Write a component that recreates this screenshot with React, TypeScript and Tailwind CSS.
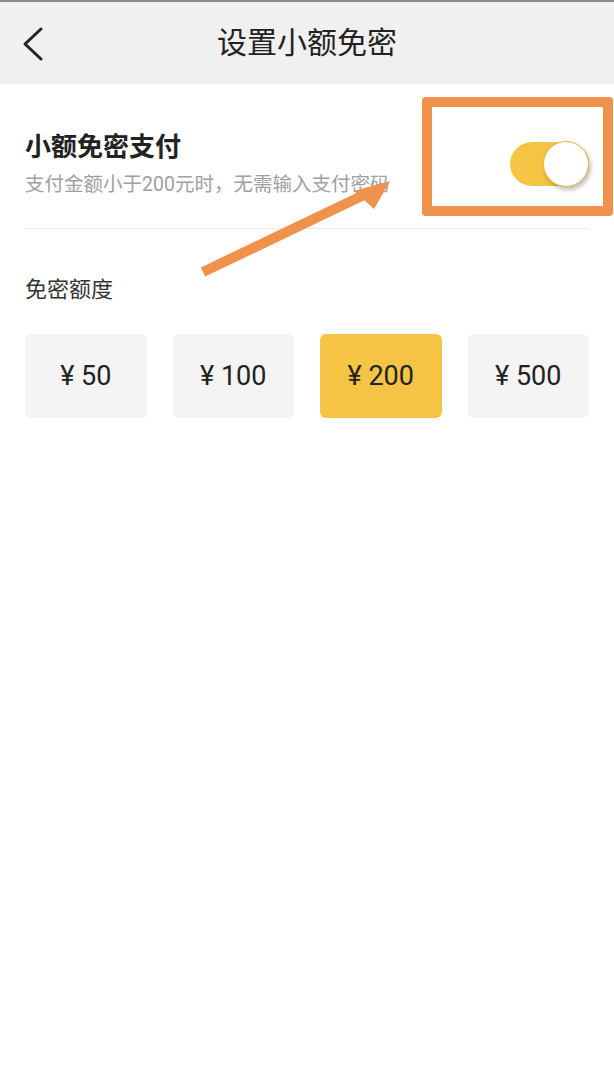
import { useState } from 'react'

const amounts = [50, 100, 200, 500]

export default function App() {
  const [enabled, setEnabled] = useState(true)
  const [amount, setAmount] = useState(200)

  return (
    <div
      className="relative min-h-[1080px] w-[614px] bg-white"
      style={{ fontFamily: 'Roboto, "Noto Sans CJK SC", sans-serif' }}
    >
      {/* header */}
      <div className="relative flex h-[84px] items-center justify-center border-t-2 border-[#8a8a8a] bg-[#f0f0f0]">
        <button className="absolute left-[18px] top-[22px] flex h-[40px] w-[30px] items-center justify-center">
          <svg width="24" height="36" viewBox="0 0 24 36" fill="none">
            <path d="M20 3 L4 18 L20 33" stroke="#222" strokeWidth="3" strokeLinecap="round" strokeLinejoin="round" />
          </svg>
        </button>
        <h1 className="text-[30px] leading-none text-[#222]">设置小额免密</h1>
      </div>

      <div className="px-[25px]">
        {/* toggle row */}
        <div className="flex items-center justify-between border-b border-[#ececec] pb-[30px] pt-[46px]">
          <div className="flex flex-col">
            <span className="text-[26px] font-bold leading-[34px] text-[#222]">小额免密支付</span>
            <span className="mt-[8px] text-[19.5px] leading-[26px] text-[#a0a0a0]">
              支付金额小于200元时，无需输入支付密码
            </span>
          </div>
          <button
            onClick={() => setEnabled(!enabled)}
            className={`relative h-[44px] w-[79px] rounded-full ${enabled ? 'bg-[#f5c444]' : 'bg-[#ddd]'}`}
          >
            <span
              className={`absolute top-[-1px] h-[46px] w-[46px] rounded-full border border-[#e2b93a] bg-white shadow-[2px_3px_4px_rgba(0,0,0,0.25)] ${enabled ? 'right-0' : 'left-0'}`}
            />
          </button>
        </div>

        {/* amount */}
        <div className="pt-[47px] text-[22px] leading-[28px] text-[#333]">免密额度</div>
        <div className="mt-[30px] grid grid-cols-4 gap-[26px]">
          {amounts.map(a => (
            <button
              key={a}
              onClick={() => setAmount(a)}
              className={`flex h-[84px] items-center justify-center rounded-[6px] text-[27px] text-[#222] ${amount === a ? 'bg-[#f5c444]' : 'bg-[#f4f4f4]'}`}
            >
              ¥ {a}
            </button>
          ))}
        </div>
      </div>

      {/* annotation overlay */}
      <div className="pointer-events-none absolute left-[422px] top-[97px] h-[119px] w-[191px] rounded-[4px] border-[10px] border-[#f0914c]" />
      <svg className="pointer-events-none absolute left-0 top-0" width="614" height="300">
        <line x1="203" y1="272" x2="368" y2="193" stroke="#f0914c" strokeWidth="10" />
        <polygon points="390,181 354,191 374,209" fill="#f0914c" />
      </svg>
    </div>
  )
}
